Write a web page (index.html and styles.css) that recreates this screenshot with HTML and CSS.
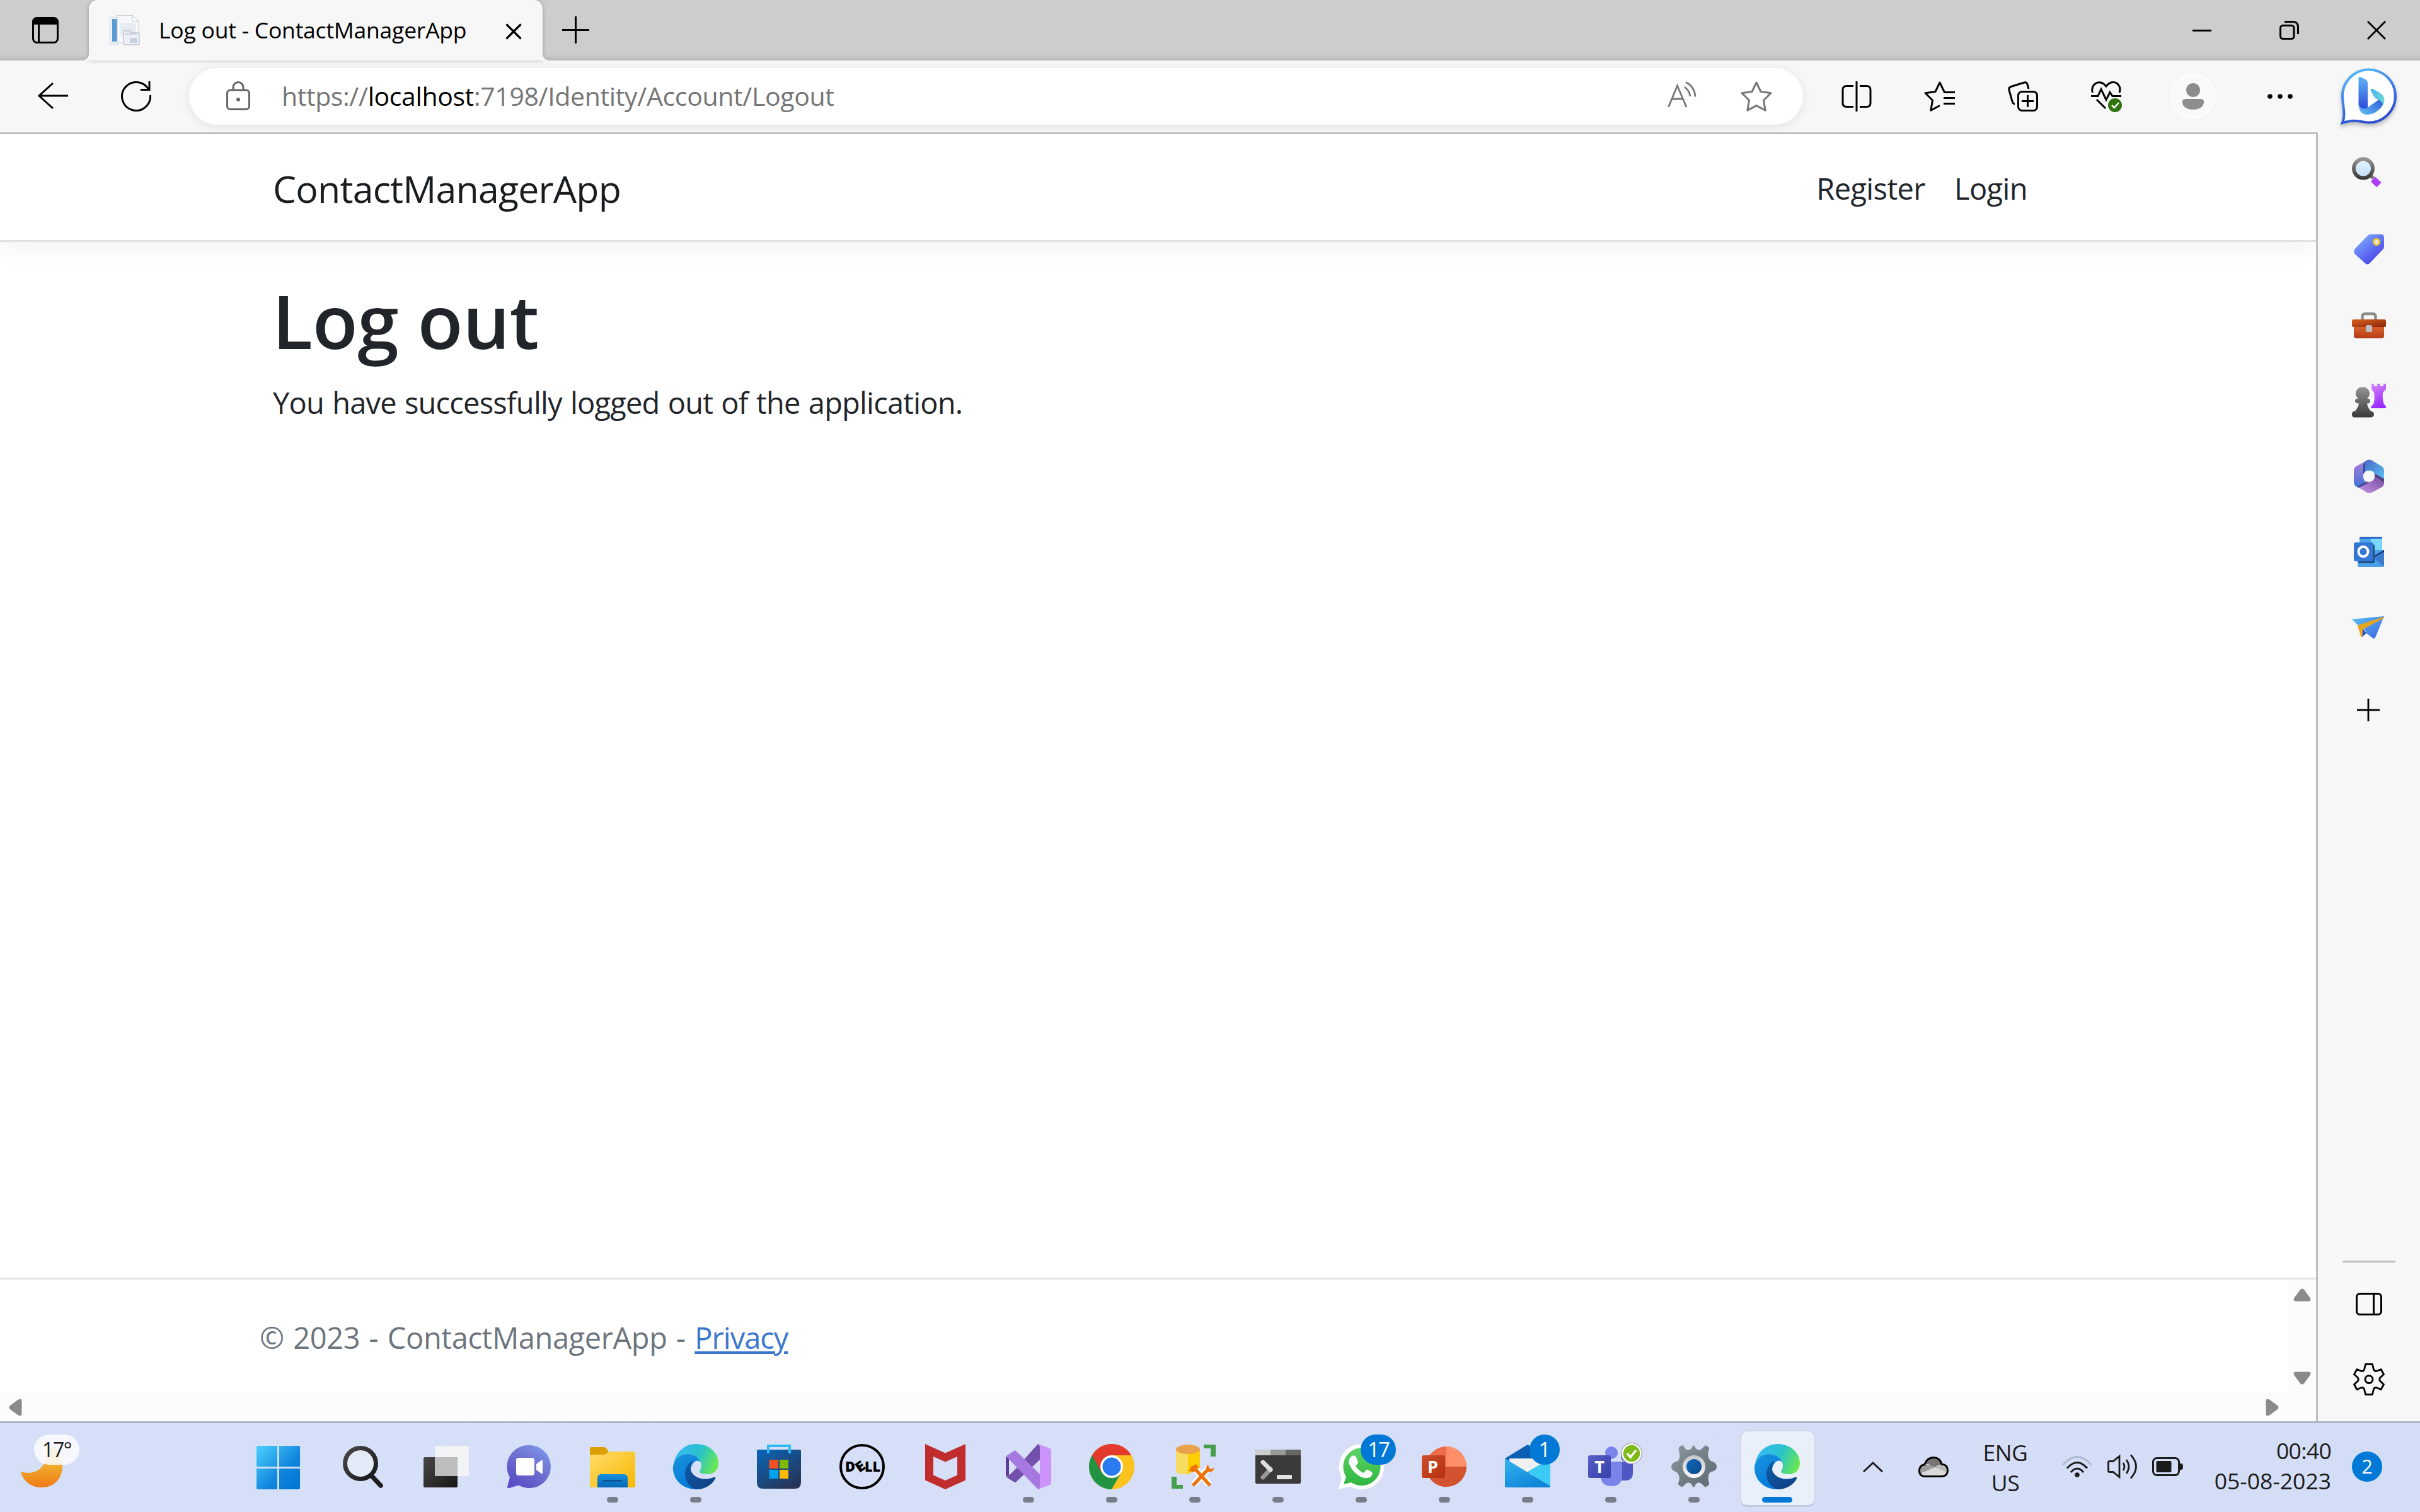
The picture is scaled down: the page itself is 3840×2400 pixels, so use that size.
FILE: index.html
```html
<!DOCTYPE html>
<html lang="en">
<head>
<meta charset="utf-8">
<title>Log out - ContactManagerApp</title>
<link rel="stylesheet" href="styles.css">
</head>
<body>
<!-- Gradients shared by several icons -->
<svg class="defs" width="0" height="0" aria-hidden="true">
  <defs>
    <linearGradient id="edgeTop" x1="0" y1=".3" x2="1" y2=".6"><stop offset="0" stop-color="#35b8f8"/><stop offset=".55" stop-color="#2ac3c9"/><stop offset="1" stop-color="#6ae94e"/></linearGradient>
    <linearGradient id="edgeMid" x1="0" y1="0" x2=".6" y2="1"><stop offset="0" stop-color="#1b93dd"/><stop offset="1" stop-color="#0078d9"/></linearGradient>
    <linearGradient id="edgeLow" x1="0" y1="0" x2="1" y2="1"><stop offset="0" stop-color="#0d5aa7"/><stop offset="1" stop-color="#113f81"/></linearGradient>
    <linearGradient id="bingRing" x1="0" y1="0" x2=".4" y2="1"><stop offset="0" stop-color="#5ac8f5"/><stop offset=".5" stop-color="#4285ee"/><stop offset="1" stop-color="#2b4fd0"/></linearGradient>
    <linearGradient id="bingStem" x1="0" y1="0" x2="0" y2="1"><stop offset="0" stop-color="#5fb4f6"/><stop offset="1" stop-color="#2c49d8"/></linearGradient>
    <linearGradient id="bingBowl" x1="0" y1="1" x2="1" y2="0"><stop offset="0" stop-color="#63c3f6"/><stop offset="1" stop-color="#2a50d6"/></linearGradient>
    <linearGradient id="bingTip" x1="0" y1="0" x2="1" y2="1"><stop offset="0" stop-color="#4eb2f6"/><stop offset="1" stop-color="#6fdfcb"/></linearGradient>
    <linearGradient id="grey" x1="0" y1="0" x2="0" y2="1"><stop offset="0" stop-color="#949494"/><stop offset="1" stop-color="#3a3a3a"/></linearGradient>
    <linearGradient id="lens" x1="0" y1="0" x2="0" y2="1"><stop offset="0" stop-color="#eaf3fd"/><stop offset="1" stop-color="#bcdcfb"/></linearGradient>
    <linearGradient id="purple" x1="0" y1="0" x2=".3" y2="1"><stop offset="0" stop-color="#d88bfa"/><stop offset="1" stop-color="#9a2cff"/></linearGradient>
    <linearGradient id="tag" x1="0" y1="0" x2=".8" y2="1"><stop offset="0" stop-color="#86bbff"/><stop offset="1" stop-color="#4438ea"/></linearGradient>
    <linearGradient id="caseLid" x1="0" y1="0" x2="1" y2="1"><stop offset="0" stop-color="#d9641c"/><stop offset="1" stop-color="#8c220d"/></linearGradient>
    <linearGradient id="caseBody" x1="0" y1="0" x2="0" y2="1"><stop offset="0" stop-color="#b8431d"/><stop offset=".4" stop-color="#d65f2b"/><stop offset="1" stop-color="#b33b16"/></linearGradient>
    <linearGradient id="mLeft" x1="0" y1="0" x2="0" y2="1"><stop offset="0" stop-color="#b07bd6"/><stop offset="1" stop-color="#3f74d8"/></linearGradient>
    <linearGradient id="mTop" x1="0" y1="0" x2="1" y2="1"><stop offset="0" stop-color="#4664c4"/><stop offset="1" stop-color="#5cc5f2"/></linearGradient>
    <linearGradient id="mLow" x1="0" y1="1" x2="1" y2="0"><stop offset="0" stop-color="#c795ea"/><stop offset="1" stop-color="#6b4596"/></linearGradient>
    <linearGradient id="plane" x1="0" y1="0" x2="1" y2="1"><stop offset="0" stop-color="#5cc3f6"/><stop offset="1" stop-color="#3f62e2"/></linearGradient>
    <linearGradient id="moon" x1="0" y1="0" x2="0" y2="1"><stop offset="0" stop-color="#f5cf45"/><stop offset=".5" stop-color="#efac2c"/><stop offset="1" stop-color="#f07a15"/></linearGradient>
    <linearGradient id="win" gradientUnits="userSpaceOnUse" x1="0" y1="0" x2="70" y2="70"><stop offset="0" stop-color="#4cd2ff"/><stop offset=".6" stop-color="#0f84dc"/><stop offset="1" stop-color="#0073d1"/></linearGradient>
    <linearGradient id="black" x1="0" y1="0" x2="1" y2="1"><stop offset="0" stop-color="#484848"/><stop offset="1" stop-color="#171717"/></linearGradient>
    <linearGradient id="chat" x1="1" y1="0" x2=".3" y2="1"><stop offset="0" stop-color="#7f9df2"/><stop offset=".45" stop-color="#7176d3"/><stop offset="1" stop-color="#5a4fc4"/></linearGradient>
    <linearGradient id="folder" x1="0" y1="0" x2="1" y2="1"><stop offset="0" stop-color="#ffdc6c"/><stop offset="1" stop-color="#f9b800"/></linearGradient>
    <linearGradient id="blue" x1="0" y1="0" x2="0" y2="1"><stop offset="0" stop-color="#1590dd"/><stop offset="1" stop-color="#0567b5"/></linearGradient>
    <linearGradient id="store" x1="0" y1="0" x2=".7" y2="1"><stop offset="0" stop-color="#0966ba"/><stop offset="1" stop-color="#273558"/></linearGradient>
    <linearGradient id="wa" x1="0" y1="0" x2="0" y2="1"><stop offset="0" stop-color="#5fd566"/><stop offset="1" stop-color="#2fb540"/></linearGradient>
    <linearGradient id="ppt" x1="0" y1="0" x2="1" y2="1"><stop offset="0" stop-color="#cc4e2b"/><stop offset="1" stop-color="#b5310f"/></linearGradient>
    <linearGradient id="teams" x1="0" y1="0" x2="1" y2="1"><stop offset="0" stop-color="#5660c6"/><stop offset="1" stop-color="#3940aa"/></linearGradient>
    <linearGradient id="mail" x1="0" y1="0" x2=".6" y2="1"><stop offset="0" stop-color="#33b6f0"/><stop offset="1" stop-color="#1184d8"/></linearGradient>
    <linearGradient id="cog" x1="0" y1="0" x2="1" y2="1"><stop offset="0" stop-color="#8b959d"/><stop offset="1" stop-color="#5c6970"/></linearGradient>
    <linearGradient id="cogRing" x1="0" y1="0" x2="0" y2="1"><stop offset="0" stop-color="#c6c6c6"/><stop offset="1" stop-color="#fafafa"/></linearGradient>
    <linearGradient id="cogHub" x1="0" y1="0" x2="1" y2="1"><stop offset="0" stop-color="#0f6cc2"/><stop offset="1" stop-color="#0a4585"/></linearGradient>
    <symbol id="edge" viewBox="0 0 72 72">
      <path fill="url(#edgeMid)" d="M0 37C1 25 10 16 23 16c12 0 20 7 20 13-2-3-5-3-7-2-5 3-8 9-8 15 0 12 11 22 23 24-5 4-10 6-15 6C16 72-1 57 0 37z"/>
      <path fill="url(#edgeLow)" d="M28 28c-6 6-9 13-9 20 0 13 10 23 19 24 12 0 24-7 29-17 1-2-1-3-3-2-15 6-30 1-35-9-3-7 0-14 4-17z"/>
      <path fill="url(#edgeTop)" d="M1 32C4 13 18 0 37 0c20 0 35 14 35 30 0 11-7 18-17 18-8 0-13-2-13-4s3-4 3-9c0-11-10-19-22-19C13 16 4 22 1 32z"/>
    </symbol>
  </defs>
</svg>

<header class="tabbar">
  <svg class="workspace" width="42" height="42" viewBox="0 0 42 42"><rect x="1.5" y="1.5" width="39" height="39" rx="6" fill="none" stroke="#000" stroke-width="3"/><path d="M1 12V7q0-6 6-6h28q6 0 6 6v5z"/><path d="M10.500 12v28" stroke="#000" stroke-width="3"/></svg>
  <div class="tab">
    <svg width="48" height="48" viewBox="0 0 48 48">
      <path fill="#eef3f9" stroke="#c9d3e0" d="M.5 3h14v43H.5z"/><path fill="#5b9bd5" d="M4 6h8v36H4z"/>
      <path fill="#f7f8fb" stroke="#ccd0da" d="M12 .5h24l10 10V44H12z"/><path fill="#fff" stroke="#b9bec9" d="M36 .5V10h10z"/>
      <path fill="#e6eaf1" d="M17 13h24v20H17z"/><path fill="#eceff6" stroke="#a9b1c0" d="M22 25h11v3h14v19H22z"/><path fill="#c9d1e0" d="M24 29h20v2H24zM32 36h12v8H32z"/>
    </svg>
    <span class="tab-title">Log out - ContactManagerApp</span>
    <svg width="26" height="26" viewBox="0 0 26 26"><path d="M1.500 1.500l23 23M24.500 1.500l-23 23" stroke="#000" stroke-width="3.200"/></svg>
  </div>
  <svg class="newtab" width="43" height="43" viewBox="0 0 43 43"><path d="M0 21.500h43M21.500 0v43" stroke="#000" stroke-width="3"/></svg>
  <div class="winbtns">
    <svg width="30" height="30" viewBox="0 0 30 30"><path d="M0 15.500h30" stroke="#000" stroke-width="3"/></svg>
    <svg width="31" height="30" viewBox="0 0 31 30"><rect x="1.500" y="7.500" width="21.500" height="21" rx="4" fill="none" stroke="#000" stroke-width="3"/><path d="M8 1.500h13q8.500 0 8.500 8.500v11" fill="none" stroke="#000" stroke-width="3"/></svg>
    <svg width="30" height="30" viewBox="0 0 30 30"><path d="M1 1l28 28M29 1L1 29" stroke="#000" stroke-width="2.800"/></svg>
  </div>
</header>

<div class="window">
  <div class="main">
    <div class="toolbar">
      <div class="tool"><svg width="48" height="48" viewBox="0 0 48 48"><path d="M24 3L2 23l22 20M2 23h46" fill="none" stroke="#000" stroke-width="3"/></svg></div>
      <div class="tool"><svg width="48" height="48" viewBox="0 0 48 48"><path d="M44 13.500A22.500 22.500 0 1 0 46.500 22M45 0v13.500H31" fill="none" stroke="#000" stroke-width="3"/></svg></div>
      <div class="address">
        <svg class="lock" width="38" height="46" viewBox="0 0 38 46"><rect x="1.500" y="14" width="35" height="30.500" rx="5" fill="none" stroke="#666" stroke-width="3"/><path d="M11 13.500v-4a8 8 0 0 1 16 0v4" fill="none" stroke="#666" stroke-width="3"/><circle cx="19" cy="29" r="3" fill="#666"/></svg>
        <span class="url"><span>https://</span><b>localhost</b><span class="path">:7198/Identity/Account/Logout</span></span>
        <svg class="aloud" width="46" height="42" viewBox="0 0 46 42"><path d="M1.500 41L15.500 7 30 41M6 28h19M27 9q8 6 9 15M29 1.500q14 7 15 23" fill="none" stroke="#767676" stroke-width="2.800"/></svg>
        <svg width="50" height="48" viewBox="0 0 50 48"><path d="M25 2l7 14.500 16 2.300-11.500 11.400 2.700 16L25 38.700l-14.200 7.500 2.700-16L2 18.800l16-2.300z" fill="none" stroke="#767676" stroke-width="3" stroke-linejoin="round"/></svg>
      </div>
      <div class="tool first"><svg width="48" height="48" viewBox="0 0 48 48"><path d="M19 7.500H8q-6 0-6 6v21q0 6 6 6h11M29 7.500h11q6 0 6 6v21q0 6-6 6H29M24 0v48" fill="none" stroke="#000" stroke-width="3"/></svg></div>
      <div class="tool"><svg width="50" height="48" viewBox="0 0 50 48"><path d="M49 17.500H32.500L25 2l-7 14.500-16 2.300 11.500 11.400-2.700 16L25 38.500M31 26.500h18M31 35.500h18" fill="none" stroke="#000" stroke-width="3" stroke-linejoin="round"/></svg></div>
      <div class="tool"><svg width="48" height="48" viewBox="0 0 48 48"><rect x="16.500" y="16.500" width="30" height="30" rx="6" fill="none" stroke="#000" stroke-width="3"/><path d="M31.500 22v19M22 31.500h19M11 36q-3 0-4-4L2 14q-1-4 3-5.500L26 2q4-1 5 3l2 7" fill="none" stroke="#000" stroke-width="3"/></svg></div>
      <div class="tool"><svg width="50" height="50" viewBox="0 0 50 50"><path d="M1 24.500h11l5-11 8 17 6-12 4 6h14M3.500 19C-1 7 14-5 25 9 36-5 51 6 46 19M10 30l14 14" fill="none" stroke="#000" stroke-width="3"/><circle cx="39" cy="39" r="11" fill="#317512"/><path d="M34 39l4 4 7-8" fill="none" stroke="#fff" stroke-width="2.500"/></svg></div>
      <div class="tool profile"><svg width="70" height="70" viewBox="0 0 70 70"><circle cx="35" cy="35" r="34" fill="#f9f9f9" stroke="#fff" stroke-width="2"/><circle cx="35" cy="25" r="11" fill="#8d8d8d"/><path d="M18 44q0-5 5-5h24q5 0 5 5c0 8-8 12-17 12s-17-4-17-12z" fill="#8d8d8d"/></svg></div>
      <div class="tool dots"><svg width="40" height="8" viewBox="0 0 40 8"><circle cx="4" cy="4" r="3.800"/><circle cx="20" cy="4" r="3.800"/><circle cx="36" cy="4" r="3.800"/></svg></div>
    </div>

    <div class="page">
      <nav class="navbar">
        <a class="brand">ContactManagerApp</a>
        <a class="link">Register</a>
        <a class="link login">Login</a>
      </nav>
      <main class="content">
        <h1>Log out</h1>
        <p>You have successfully logged out of the application.</p>
      </main>
      <footer class="footer">
        <div class="footer-text">
          <span class="copy">© 2023 - ContactManagerApp - </span><a class="privacy">Privacy</a>
        </div>
        <div class="vscroll">
          <svg width="28" height="21" viewBox="0 0 28 21"><path d="M11 2q3-3 6 0l9.500 13q2.500 5.500-2.500 5.500H4q-5 0-2.500-5.500z"/></svg>
          <svg width="28" height="21" viewBox="0 0 28 21"><path d="M11 19q3 3 6 0l9.500-13Q29 .5 24 .5H4Q-1 .5 1.500 6z"/></svg>
        </div>
        <div class="hscroll">
          <svg width="21" height="28" viewBox="0 0 21 28"><path d="M2 11q-3 3 0 6l13 9.500q5.500 2.500 5.500-2.500V4q0-5-5.500-2.500z"/></svg>
          <svg width="21" height="28" viewBox="0 0 21 28"><path d="M19 11q3 3 0 6L6 26.500Q.5 29 .5 24V4Q.5-1 6 1.500z"/></svg>
        </div>
      </footer>
    </div>
  </div>

  <aside class="sidebar">
    <svg class="bing" width="96" height="98" viewBox="-3 0 96 98"><path d="M3 88C8 76 4 64 3 48A42 42 0 1 1 45 87.500C32 87 24 81 3 88z" fill="#fff" stroke="url(#bingRing)" stroke-width="4"/><path d="M28.500 17q0-3 3-2l8 4q3.500 2 3.500 6v42q-14 3-14.500-8z" fill="url(#bingStem)"/><path d="M29 59q2 8 12 6l17-12 9-8q4 14-6 22-10 9-21 8-11-2-11-16z" fill="url(#bingBowl)"/><path d="M48 37q-1-4 3-3l11 6q8 5 7.500 14-.5 4-2 6-2-7-8-9l-5-2z" fill="url(#bingTip)"/></svg>
    <div class="apps">
      <div><svg width="60" height="60" viewBox="0 0 60 60"><path d="M33 33l4 4" stroke="#777" stroke-width="6"/><path d="M36.500 38.500l9.500 9" stroke="#b03cfa" stroke-width="10.500"/><circle cx="21" cy="21.500" r="15" fill="url(#lens)" stroke="url(#grey)" stroke-width="6"/></svg></div>
      <div><svg width="60" height="60" viewBox="0 0 60 60"><path d="M29 7q2-1 4-1h16q5 0 5 5v14q0 3-2 5L31 52q-4 3-7 0L7.500 37q-3-4 0-8z" fill="url(#tag)"/><circle cx="42" cy="18" r="4.500" fill="#e9e6f5" stroke="#f4cf1d" stroke-width="3.200"/></svg></div>
      <div><svg width="60" height="60" viewBox="0 0 60 60"><path d="M19.500 22v-5q0-5 5-5h11q5 0 5 5v5" fill="none" stroke="#8d8d8d" stroke-width="4.500"/><rect x="6" y="24" width="48" height="27" rx="4" fill="url(#caseBody)"/><rect x="3" y="21" width="54" height="12" rx="2.500" fill="url(#caseLid)"/><rect x="25" y="30" width="10" height="11" rx="2.500" fill="#bdbec3"/></svg></div>
      <div><svg width="60" height="60" viewBox="0 0 60 60"><path d="M34 3h4v4h5V3h5v4h5V3h4v9l-5 5q-1 12 2 19 3 1 3 6H33q0-4 4-6 3-8 1-19l-4-5z" fill="url(#purple)"/><path d="M20 8.500a10 10 0 0 1 7 18q5 0 5 4t-5 4q1 7 6 12 5 1 5 5t-4 5H7q-4 0-4-5t5-5q5-6 6-12-6 0-6-4t5-4a10 10 0 0 1 7-18z" fill="url(#grey)"/></svg></div>
      <div><svg width="60" height="60" viewBox="0 0 60 60"><path d="M26 5L10 14q-4 2-4 7v18q0 6 5 8l3 1.500L27 40q-6-3-6-10V12q0-4 5-7z" fill="url(#mLeft)"/><path d="M26 5q4-3 9 0l15 9q4 2 4 7v14L39 27q-1-6-9-6-6 0-9 5V12q0-4 5-7z" fill="url(#mTop)"/><path d="M13 47.500l12-6 5-3q8 0 9-8v-5l15 9v6q0 5-4 7l-15 8q-5 2-9 0z" fill="url(#mLow)"/><path d="M12 46l15-8 3 2-15 8zM39 26l15 8v5l-15-9z" fill="#34306f" opacity=".65"/><path d="M21 12l3-5v16l-3 4z" fill="#1f3f86" opacity=".7"/><circle cx="30" cy="30" r="8.800" fill="#f7f7f7"/></svg></div>
      <div><svg width="60" height="60" viewBox="0 0 60 60"><rect x="15" y="6" width="36" height="26" rx="2" fill="#4ea6ea"/><path d="M33 8h18v20H33z" fill="#7ad8ff"/><path d="M15 9V8q0-2 2-2h32q2 0 2 2v1z" fill="#2e63c4"/><path d="M12 27h42v25q0 2-2 2H14q-2 0-2-2z" fill="#4a9fe6"/><path d="M54 29L36 38l16 14q2 0 2-2z" fill="#3a7bd0"/><path d="M54 27v3L37 39v-2z" fill="#17346f"/><rect x="13" y="18" width="26" height="30" rx="3" fill="#1b4d80"/><rect x="6" y="15" width="31" height="30" rx="3" fill="#3476d4"/><ellipse cx="21" cy="29.500" rx="7.500" ry="7.800" fill="none" stroke="#fff" stroke-width="4"/></svg></div>
      <div><svg width="60" height="60" viewBox="0 0 60 60"><path d="M3 17l51-5-14 34q-1 3-4 1L26 39l-7-14-7 1z" fill="url(#plane)"/><path d="M20 31l6 8-7 6z" fill="#2b50b8"/><path d="M12 26.500L54 13v2L20 33l-1 12q-1 1-2-1z" fill="#e9a51c"/></svg></div>
    </div>
    <svg class="add" width="36" height="36" viewBox="0 0 36 36"><path d="M0 18h36M18 0v36" stroke="#000" stroke-width="2.800"/></svg>
    <div class="side-bottom">
      <svg width="42" height="36" viewBox="0 0 42 36"><rect x="1.500" y="1.500" width="39" height="33" rx="5" fill="none" stroke="#000" stroke-width="3"/><path d="M28.500 1v34" stroke="#000" stroke-width="3"/></svg>
      <svg width="50" height="52" viewBox="-1 0 50 52"><path d="M18.500 1.500h11l2 8.500q2 3.500 5.500 2l6-2.500 4.500 8-5.500 5q-2.500 3 0 6l5.500 5-4.500 8-6-2.500q-4-1.500-5.500 2l-2 8.500h-11l-2-8.500q-1.500-3.500-5.500-2l-6 2.500-4.500-8 5.500-5q2.500-3 0-6l-5.500-5 4.500-8 6 2.500q4 1.500 5.500-2z" fill="none" stroke="#000" stroke-width="2.800" stroke-linejoin="round"/><circle cx="24" cy="25.500" r="6" fill="none" stroke="#000" stroke-width="2.800"/></svg>
    </div>
  </aside>
</div>

<div class="taskbar">
  <div class="weather">
    <svg width="70" height="70" viewBox="0 0 70 70"><path d="M43 0c14 8 24 22 23 38-1 18-14 31-33 31C15 69 4 58 0 45q0-2 2-1c8 4 22 2 30-6C42 28 44 12 43 0z" fill="url(#moon)"/></svg>
    <span class="temp">17°</span>
  </div>
  <div class="tasks">
    <div class="task start"><svg width="72" height="72" viewBox="0 0 72 72"><g transform="translate(1 3)"><path fill="url(#win)" d="M2 0h31v33H0V2q0-2 2-2zM36 0h31q2 0 2 2v31H36zM0 36h33v33H2q-2 0-2-2zM36 36h33v31q0 2-2 2H36z"/></g></svg></div>
    <div class="task"><svg width="72" height="72" viewBox="0 0 72 72"><circle cx="32" cy="31" r="24.500" fill="#e3eaf8" stroke="url(#black)" stroke-width="7"/><path d="M49 50l15 16" stroke="#1f1f1f" stroke-width="7.500" stroke-linecap="round"/></svg></div>
    <div class="task"><svg width="72" height="72" viewBox="0 0 72 72"><rect x="0" y="21" width="54" height="48" rx="2.500" fill="url(#black)"/><path d="M18 21h34q2 0 2 2v28H18z" fill="#bdbdbd"/><path d="M20 3h50q2 0 2 2v44q0 2-2 2H54V21H18V5q0-2 2-2z" fill="#f2f3f5"/></svg></div>
    <div class="task"><svg width="72" height="72" viewBox="0 0 72 72"><path d="M36 2a34 34 0 1 1-17 63.500L4 70q-3 1-3-2l4-15A34 34 0 0 1 36 2z" fill="url(#chat)"/><rect x="15" y="22" width="29" height="28" rx="4" fill="#fff"/><path d="M47 32l8-6q2-1 2 1v19q0 2-2 1l-8-6z" fill="#fff"/></svg></div>
    <div class="task run"><svg width="72" height="72" viewBox="0 0 72 72"><path d="M0 18V7q0-2 2-2h20q3 0 5 3l4 6-6 6z" fill="#dd9e00"/><path d="M30 12h40q2 0 2 2v53q0 2-2 2H2q-2 0-2-2V17h24z" fill="url(#folder)"/><path d="M12 69V54q0-6 6-6h36q6 0 6 6v15z" fill="url(#blue)"/><path d="M22 58.500h28" stroke="#0b4e93" stroke-width="2.500" stroke-linecap="round"/></svg></div>
    <div class="task run"><svg width="72" height="72"><use href="#edge"/></svg></div>
    <div class="task"><svg width="72" height="72" viewBox="0 0 72 72"><path d="M1 11q0-2 2-2h66q2 0 2 2v50q0 10-10 10H11Q1 71 1 61z" fill="url(#store)"/><path d="M19 15V3h34v12" fill="none" stroke="#2db9f4" stroke-width="4"/><path fill="#f25022" d="M20.500 25h14.500v14H20.500z"/><path fill="#7fba00" d="M37 25h14v14H37z"/><path fill="#00a4ef" d="M20.500 41h14.500v14H20.500z"/><path fill="#ffb900" d="M37 41h14v14H37z"/></svg></div>
    <div class="task"><svg width="72" height="72" viewBox="0 0 72 72"><circle cx="36" cy="36" r="34" fill="none" stroke="#000" stroke-width="4"/><text x="9" y="44" class="dell" textLength="16" lengthAdjust="spacingAndGlyphs">D</text><text x="26" y="43.500" class="dell" transform="rotate(-35 33 36)" textLength="14" lengthAdjust="spacingAndGlyphs">E</text><text x="40" y="44" class="dell" textLength="25" lengthAdjust="spacingAndGlyphs">LL</text></svg></div>
    <div class="task"><svg width="72" height="72" viewBox="0 0 72 72"><path fill="#c02d2c" fill-rule="evenodd" d="M4 0l32 14.500L68 0v57.500L36 72 4 57.500zM17 20v29.500L36 58l19-8.500V20l-19 8.500z"/></svg></div>
    <div class="task run"><svg width="72" height="72" viewBox="0 0 72 72"><path fill="#5c3f95" d="M0 20l5 3v27l-5 2z"/><path fill="#7450ad" d="M51 0l3 2v23L15 61.500 1 53q9-7 17-16z"/><path fill="#a678e0" d="M2 18l13-8 39 38v23.500L51 72 1 20z"/><path fill="#cc94fb" d="M51 0l19 7q2 1 2 3v52q0 2-2 3l-19 7q3-2 3-5V5q0-3-3-5z"/></svg></div>
    <div class="task run"><svg width="72" height="72" viewBox="0 0 72 72"><circle cx="36" cy="36" r="36" fill="#fcc31e"/><path fill="#e33b2e" d="M36 36L4.800 18A36 36 0 0 1 67.200 18H36z"/><path fill="#229342" d="M36 36v0L4.800 18A36 36 0 0 0 36 72l15.600-27z"/><path fill="#e33b2e" d="M4.800 18L20 45l16-27z"/><path fill="#fcc31e" d="M36 18h31.200A36 36 0 0 1 36 72l16-27z"/><circle cx="36" cy="36" r="18" fill="#fff"/><circle cx="36" cy="36" r="14.500" fill="#2b7af0"/></svg></div>
    <div class="task run"><svg width="76" height="72" viewBox="2 0 76 72"><path fill="#f8dc60" d="M10 8v36q3 5 19 4V8z"/><path fill="#fbcf00" d="M29 8h19v30L29 48z"/><ellipse cx="29" cy="8.500" rx="19" ry="7.500" fill="#eaa24d"/><path fill="#459e4c" d="M54 1h19v19h-8V7H54zM3 52h8v13h10v6H3z"/><path d="M38 64l24-26M63 64L39 38" stroke="#fff" stroke-width="10"/><path d="M37 66l25-27M64 66L39 38" stroke="#ee7205" stroke-width="5.500"/><path d="M61 32q-6 8 0 12 7 2 10-6l-6 2-3-3zM30 44l4-8 8-4 4 5-8 8-5-2z" fill="#ee7205"/></svg></div>
    <div class="task run"><svg width="72" height="72" viewBox="0 0 72 72"><rect y="9" width="72" height="54" rx="2" fill="#3a3a3a"/><path fill="#ccc" d="M2 9h22v9H0v-7q0-2 2-2z"/><path fill="#999" d="M24 9h24v9H24z"/><path fill="#666" d="M48 9h22q2 0 2 2v7H48z"/><path d="M12 53l12-13" stroke="#999" stroke-width="7" stroke-linecap="round"/><path d="M12 29l12 12" stroke="#ddd" stroke-width="7" stroke-linecap="round"/><rect x="34" y="49" width="24" height="7" rx="1.500" fill="#e2e2e2"/></svg></div>
    <div class="task run"><svg width="72" height="72" viewBox="0 0 72 72"><path fill="#fff" d="M36 0a36 36 0 1 1-17 67.500L0 72l5-19A36 36 0 0 1 36 0z"/><path fill="url(#wa)" d="M36 6a30 30 0 1 1-16 55L8 64l4-12A30 30 0 0 1 36 6z"/><path fill="#fff" d="M20 20q5-4 8 1l3 8q0 2-4 6 5 8 13 11l4-5q2-1 9 4 2 2-1 6-6 6-17 1-12-6-18-20-2-7 3-12z"/></svg><span class="badge wide">17</span></div>
    <div class="task run"><svg width="72" height="72" viewBox="0 0 72 72"><circle cx="39" cy="36" r="32" fill="#ed6c47"/><path fill="#ff8f6b" d="M39 4a32 32 0 0 1 32 32H39z"/><path fill="#d35230" d="M7 36h64a32 32 0 0 1-64 0z"/><rect y="18" width="37" height="36" rx="3" fill="url(#ppt)"/><text x="17.500" y="46" class="letter">P</text></svg></div>
    <div class="task run"><svg width="72" height="72" viewBox="0 0 72 72"><path fill="#0a5fb0" d="M36 1l36 22-36 24L0 23z"/><path fill="#f0f0f0" d="M7 23h58v6L36 46 7 30z"/><path fill="#3ccbf4" d="M72 23v46L36 44z"/><path fill="url(#mail)" d="M0 23l72 44q0 2-2 2H2q-2 0-2-2z"/></svg><span class="badge one">1</span></div>
    <div class="task run"><svg width="72" height="72" viewBox="0 0 72 72"><circle cx="60" cy="20" r="8" fill="#4a52b8"/><path fill="#4f57c4" d="M50 28h18q3 0 3 3v15q0 12-12 12h-9z"/><circle cx="37" cy="14" r="10" fill="#7b83eb"/><path fill="#7b83eb" d="M22 28h30q2 0 2 2v20q0 17-17 17T20 50z"/><rect y="18" width="36" height="36" rx="3" fill="url(#teams)"/><text x="18" y="46" class="letter">T</text></svg>
      <svg class="status" width="36" height="36" viewBox="0 0 36 36"><circle cx="18" cy="18" r="17" fill="#a39fae"/><circle cx="18" cy="18" r="14.500" fill="#7fba1b" stroke="#fff" stroke-width="2.500"/><path d="M11 18l5 6 9-11" fill="none" stroke="#fff" stroke-width="3.500"/></svg></div>
    <div class="task run"><svg width="72" height="72" viewBox="0 0 72 72"><path fill="url(#cog)" d="M17 2q2 0 4 4 3 4 7 3.500 4-1 6-6 1-2 3 0 2 5 6 6 4 .5 7-3.500 3-4 5-3.500 6 3 5 5-3 9-1 14 2 5 5 6 8 2 8 8.500T64 44q-4 1-5 6-1 5 1 12 1 3-5 6-3 1-5-3-3-4-7-3.500-4 .5-6 6-1 2-3 0-2-5-6-6-4-.5-7 3.500-3 4-5 3-6-3-5-6 3-7 1-12t-5-6Q0 42 0 36t8-8q4-1 5-6t-1-12q-2-5 5-8z"/><circle cx="36" cy="36" r="18" fill="url(#cogRing)"/><circle cx="36" cy="36" r="12" fill="url(#cogHub)"/></svg></div>
    <div class="task active"><svg width="72" height="72"><use href="#edge"/></svg></div>
  </div>
  <div class="tray">
    <svg class="chev" width="32" height="17" viewBox="0 0 32 17"><path d="M1 16L16 2l15 14" fill="none" stroke="#1b1b1b" stroke-width="3"/></svg>
    <svg class="cloud" width="48" height="33" viewBox="0 0 48 33"><path d="M10 31.500q-8.500-1-8.500-9 0-8 8.500-10Q14 1.500 24 1.500T37 12q9.500 1 9.500 10 0 8.500-9 9.500z" fill="#d9d9d9"/><path d="M3 27q-4-12 8-14 6-1 15 4z" fill="#9b9b9b"/><path d="M11 12Q15 1.500 24 1.500T37 12l-11 5-10-5z" fill="#757575"/><path d="M26 17q8-7 16-3 5 4 4 11z" fill="#b9b9b9"/><path d="M10 31.500q-8.500-1-8.500-9 0-8 8.500-10Q14 1.500 24 1.500T37 12q9.500 1 9.500 10 0 8.500-9 9.500z" fill="none" stroke="#000" stroke-width="3"/></svg>
    <div class="lang"><span>ENG</span><span>US</span></div>
    <svg class="wifi" width="48" height="34" viewBox="0 0 48 34"><g fill="none" stroke="#1b1b1b" stroke-width="3"><path d="M1.500 14q22-25 45 0" stroke="#aeb8cf"/><path d="M8 19.500q16-18 32 0M14 26q10-12 20 0"/></g><circle cx="24" cy="30" r="3.800" fill="#1b1b1b"/></svg>
    <svg class="vol" width="48" height="40" viewBox="0 0 48 40"><path d="M1.500 13.500q0-2 2-2H9l10-8v33l-10-8H3.500q-2 0-2-2zM25 14q4 6 0 12M30 9q8 11 0 22M37 1.500q17 18 0 37" fill="none" stroke="#1b1b1b" stroke-width="2.800"/></svg>
    <svg class="batt" width="50" height="30" viewBox="0 0 50 30"><rect x="1.500" y="1.500" width="41" height="27" rx="6" fill="none" stroke="#1b1b1b" stroke-width="3"/><rect x="6.500" y="6" width="24" height="18" rx="2" fill="#1b1b1b"/><path d="M44 10h2q3 0 3 5t-3 5h-2z" fill="#1b1b1b"/></svg>
    <div class="clock"><span class="time">00:40</span><span>05-08-2023</span></div>
    <span class="count">2</span>
  </div>
</div>
</body>
</html>
```
FILE: styles.css
```css
* { box-sizing: border-box; }

body {
  margin: 0;
  width: 3840px;
  height: 2400px;
  overflow: hidden;
  display: flex;
  flex-direction: column;
  font-family: "Open Sans", "Noto Sans", sans-serif;
  background: #f7f7f7;
  color: #000;
}

svg { display: block; flex: none; }
.defs { position: absolute; }
span, a, b { white-space: pre; }

/* Tab strip */
.tabbar {
  height: 96px;
  flex: none;
  display: flex;
  align-items: center;
  background: linear-gradient(#cdcdcd 86px, #b8b8b8);
}
.workspace { margin-left: 51px; }
.tab {
  position: relative;
  width: 720px;
  height: 96px;
  margin-left: 48px;
  padding: 0 33px;
  display: flex;
  align-items: center;
  background: #f7f7f7;
  border-radius: 14px 14px 0 0;
  box-shadow: 0 0 6px rgba(0, 0, 0, .25);
}
.tab::before,
.tab::after {
  content: "";
  position: absolute;
  bottom: 0;
  width: 10px;
  height: 10px;
}
.tab::before { left: -10px; background: radial-gradient(circle at 0 0, transparent 9.5px, #f7f7f7 10px); }
.tab::after { right: -10px; background: radial-gradient(circle at 100% 0, transparent 9.5px, #f7f7f7 10px); }
.tab-title {
  flex: 1;
  margin: -3px 0 0 30px;
  font-size: 35.500px;
  letter-spacing: -.22px;
}
.tab svg:last-child { margin-top: 4px; }
.newtab { margin: -2px 0 0 31px; }
.winbtns {
  margin-left: auto;
  padding-right: 54px;
  display: flex;
  gap: 108px;
}

/* Window body */
.window { flex: 1; display: flex; position: relative; }
.main { width: 3678px; display: flex; flex-direction: column; }

.toolbar {
  height: 114px;
  flex: none;
  padding-left: 18px;
  display: flex;
  align-items: center;
}
.tool { width: 132px; display: flex; justify-content: center; }
.tool.first { margin-left: 19px; }
.tool.profile { width: 144px; }
.tool.dots { width: 120px; margin-left: 6px; }
.address {
  width: 2561px;
  height: 90px;
  margin-left: 18px;
  padding: 0 49px 0 59px;
  display: flex;
  align-items: center;
  background: #fff;
  border-radius: 45px;
  box-shadow: 0 3px 16px rgba(0, 0, 0, .09);
}
.lock { margin-top: -3px; }
.url {
  flex: 1;
  margin: -3px 0 0 50px;
  font-size: 41px;
  letter-spacing: -.4px;
  color: #767676;
}
.url b { font-weight: 400; color: #000; }
.url .path { letter-spacing: -.35px; }
.aloud { margin: -6px 70px 0 0; }

/* Web page */
.page {
  flex: 1;
  display: flex;
  flex-direction: column;
  border-top: 3px solid #bfbfbf;
  border-right: 3px solid #bfbfbf;
  background: #fff;
  color: #212529;
  font-size: 47px;
}
.navbar {
  height: 171px;
  flex: none;
  padding: 0 458px 0 433px;
  display: flex;
  align-items: center;
  border-bottom: 3px solid #dee2e6;
  box-shadow: 0 12px 36px rgba(0, 0, 0, .05);
  clip-path: inset(0 0 -60px 0);
}
.brand {
  flex: 1;
  padding-top: 4px;
  font-size: 59px;
  letter-spacing: -.8px;
  color: #1a1d20;
}
.link { margin-top: 4px; letter-spacing: -.6px; }
.login { margin-left: 46px; }
.content { flex: 1; padding: 53px 432px 0; }
h1 {
  margin: 0;
  font-size: 118px;
  font-weight: 550;
  line-height: 144px;
  letter-spacing: -.4px;
}
p {
  margin: 22px 0 0 1px;
  line-height: 72px;
  letter-spacing: -.8px;
  word-spacing: 1.800px;
}

/* Footer with the scrollbars of its overflow area */
.footer {
  height: 228px;
  flex: none;
  display: grid;
  grid-template-columns: 1fr 45px;
  grid-template-rows: 180px 45px;
  border-top: 3px solid #dee2e6;
}
.footer-text {
  padding-left: 412px;
  line-height: 185px;
  color: #6c757d;
}
.copy { letter-spacing: -.4px; word-spacing: 2.700px; }
.privacy {
  letter-spacing: -1px;
  color: #3b77cf;
  text-decoration: underline;
  text-decoration-thickness: 4px;
  text-underline-offset: 4px;
}
.vscroll,
.hscroll {
  display: flex;
  justify-content: space-between;
  align-items: center;
  background: #fcfcfc;
  fill: #8a8a8a;
}
.vscroll { flex-direction: column; padding: 14px 0 13px; }
.hscroll { grid-column: 1 / 3; padding: 0 59px 0 14px; }

/* Edge sidebar */
.sidebar {
  width: 162px;
  display: flex;
  flex-direction: column;
  align-items: center;
  padding: 11px 0 6px;
}
.bing { margin-bottom: 11px; filter: drop-shadow(0 4px 3px rgba(0, 0, 0, .25)); }
.apps > div { height: 120px; display: flex; align-items: center; }
.add { margin: 53px 2px 0 0; }
.side-bottom {
  width: 84px;
  margin-top: auto;
  padding-top: 48px;
  display: flex;
  flex-direction: column;
  align-items: center;
  gap: 76px;
  border-top: 3px solid #bfbfbf;
  padding-bottom: 34px;
}

/* Taskbar */
.taskbar {
  height: 144px;
  flex: none;
  display: flex;
  border-top: 3px solid #abb3c5;
  background: linear-gradient(90deg, #d5e0f8, #d6dff7 50%, #d3ddf5);
}
.weather { position: relative; width: 378px; padding: 33px 0 0 33px; }
.temp {
  position: absolute;
  left: 54px;
  top: 18px;
  width: 72px;
  height: 48px;
  border-radius: 24px;
  background: rgba(250, 251, 253, .88);
  color: #1b1b1b;
  font-size: 32px;
  line-height: 48px;
  letter-spacing: -1.500px;
  text-align: center;
}
.tasks { display: flex; }
.task {
  position: relative;
  width: 132px;
  padding-top: 33px;
  display: flex;
  flex-direction: column;
  align-items: center;
}
.task.start { padding-right: 5px; }
.task.run::after,
.task.active::after {
  content: "";
  width: 18px;
  height: 9px;
  margin-top: 12px;
  border-radius: 4.500px;
  background: #787d8b;
}
.task.active::before {
  content: "";
  position: absolute;
  left: 7px;
  top: 11px;
  width: 116px;
  height: 117px;
  border: 2px solid #cfd8ec;
  border-bottom: 3px solid #c0cae0;
  border-radius: 12px;
  background: #eaf0fa;
}
.task.active svg { position: relative; }
.task.active::after { position: relative; width: 48px; background: #0078d6; }
.badge {
  position: absolute;
  top: 18px;
  height: 48px;
  border-radius: 24px;
  background: #0078d6;
  color: #fff;
  font-size: 33px;
  line-height: 47px;
  text-align: center;
}
.badge.wide { left: 65px; width: 56px; letter-spacing: -2px; }
.badge.one { left: 69px; width: 48px; }
.status { position: absolute; left: 81px; top: 30px; }
.letter {
  font-size: 27px;
  font-weight: 700;
  fill: #fff;
  text-anchor: middle;
}
.dell { font-size: 22px; font-weight: 800; }

.tray {
  flex: 1;
  display: flex;
  align-items: center;
  color: #1b1b1b;
  font-size: 35.500px;
  line-height: 48px;
}
.chev { margin: -3px 0 0 70px; }
.cloud { margin: -3px 0 0 56px; }
.lang {
  width: 90px;
  margin: -2px 0 0 45px;
  display: flex;
  flex-direction: column;
  align-items: center;
  letter-spacing: -.5px;
}
.wifi { margin: -4px 0 0 45px; }
.vol { margin: -3px 0 0 24px; }
.batt { margin: -3px 0 0 23px; }
.clock {
  width: 234px;
  margin-top: -7px;
  display: flex;
  flex-direction: column;
  align-items: flex-end;
}
.time { letter-spacing: -.7px; }
.count {
  width: 48px;
  height: 48px;
  margin: -3px 0 0 33px;
  border-radius: 50%;
  background: #0078d6;
  color: #fff;
  font-size: 31px;
  line-height: 46px;
  text-align: center;
}
```
